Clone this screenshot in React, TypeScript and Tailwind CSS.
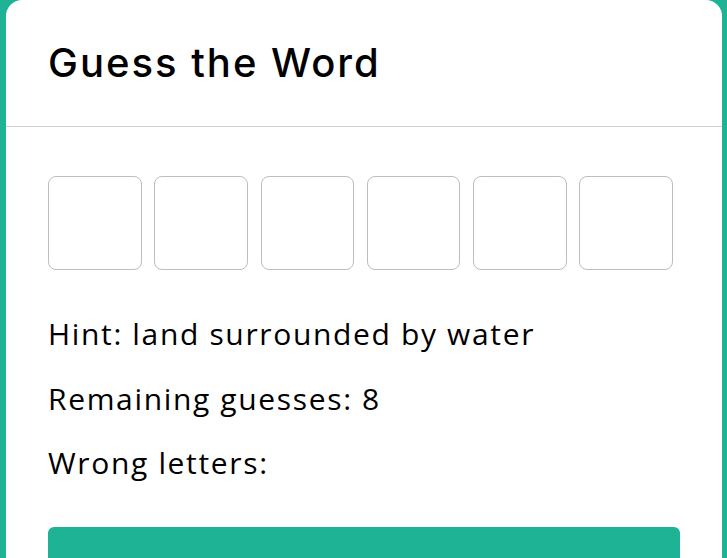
import React from "react";

export default function App() {
  const boxes = [0, 1, 2, 3, 4, 5];
  return (
    <div className="h-[558px] w-[727px] overflow-hidden bg-[#1db394] pl-[6px] pr-[5px]" style={{ fontFamily: '"Open Sans", sans-serif' }}>
      <div className="h-full rounded-t-[16px] bg-white">
        <div className="flex h-[127px] items-center border-b border-[#d0d0d0] px-[42px]">
          <h1 className="text-[40px] font-medium leading-none tracking-[2px] text-black" style={{ fontFamily: 'Inter, sans-serif' }}>Guess the Word</h1>
        </div>
        <div className="px-[42px] pt-[49px]">
          <div className="flex gap-[12.8px]">
            {boxes.map((b) => (
              <div key={b} className="h-[94px] w-[93.5px] rounded-[8px] border border-[#bdbdbd]" />
            ))}
          </div>
          <div className="mt-[44px] flex flex-col gap-[24.5px] text-[30px] leading-[40px] tracking-[1.65px] text-black">
            <p>Hint: land surrounded by water</p>
            <p>Remaining guesses: 8</p>
            <p>Wrong letters:</p>
          </div>
          <div className="mt-[44px] h-[60px] w-[632px] rounded-[6px] bg-[#1db394]" />
        </div>
      </div>
    </div>
  );
}
